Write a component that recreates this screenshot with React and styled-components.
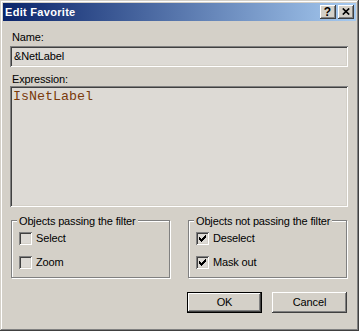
import React from "react";
import styled, { createGlobalStyle } from "styled-components";

const Global = createGlobalStyle`
  html, body { margin: 0; padding: 0; background: #d4d0c8; }
  * { box-sizing: border-box; }
`;

const FACE = "#d4d0c8";
const FIELD = "#dddad5";

const Window = styled.div`
  width: 359px;
  height: 331px;
  background: ${FACE};
  padding: 3px;
  display: flex;
  flex-direction: column;
  box-shadow: inset -1px -1px #404040, inset 1px 1px ${FACE},
    inset -2px -2px #808080, inset 2px 2px #ffffff;
  font-family: "Liberation Sans", Arial, sans-serif;
  font-size: 11px;
  letter-spacing: -0.15px;
  color: #000;
`;

const TitleBar = styled.div`
  height: 18px;
  display: flex;
  align-items: center;
  padding: 0 2px;
  background: linear-gradient(to right, #0a246a, #a6caf0);
`;

const TitleText = styled.div`
  flex: 1;
  color: #fff;
  font-weight: bold;
  letter-spacing: 0.3px;
  line-height: 14px;
`;

const CaptionGroup = styled.div`
  display: flex;
  gap: 2px;
`;

const CaptionButton = styled.div`
  width: 16px;
  height: 14px;
  background: ${FACE};
  display: flex;
  align-items: center;
  justify-content: center;
  padding: 0 1px 1px 0;
  box-shadow: inset -1px -1px #404040, inset 1px 1px #ffffff,
    inset -2px -2px #808080;
  font-weight: bold;
  font-size: 12px;
  line-height: 12px;
  letter-spacing: 0;
`;

const Client = styled.div`
  flex: 1;
  display: flex;
  flex-direction: column;
  padding: 10px 8px 0 7px;
`;

const FieldLabel = styled.div`
  line-height: 13px;
  padding-left: 2px;
  margin-top: ${(p) => p.$gap || 0}px;
`;

const sunken = `
  background: ${FIELD};
  box-shadow: inset 1px 1px #808080, inset -1px -1px #ffffff,
    inset 2px 2px #404040, inset -2px -2px ${FACE};
`;

const NameField = styled.div`
  ${sunken}
  margin-top: 2px;
  height: 21px;
  line-height: 21px;
  padding-left: 4px;
`;

const ExpressionBox = styled.div`
  ${sunken}
  height: 121px;
  padding: 3px 3px;
  font-family: "Liberation Mono", "Courier New", monospace;
  font-size: 13.33px;
  letter-spacing: 0;
  line-height: 15px;
  color: #7a3a0c;
`;

const GroupRow = styled.div`
  display: flex;
  justify-content: space-between;
  margin-top: 13px;
  padding: 0 1px;
`;

const GroupBox = styled.div`
  position: relative;
  width: 159px;
  height: 58px;
  border: 1px solid #808080;
  box-shadow: inset 1px 1px #ffffff, 1px 1px #ffffff;
  padding: 11px 7px 0;
  display: flex;
  flex-direction: column;
  gap: 11px;
`;

const Legend = styled.div`
  position: absolute;
  top: -6px;
  left: 5px;
  padding: 0 2px;
  background: ${FACE};
  line-height: 13px;
  white-space: nowrap;
`;

const CheckRow = styled.div`
  display: flex;
  align-items: center;
  gap: 4px;
  height: 13px;
  line-height: 13px;
`;

const CheckBox = styled.div`
  ${sunken}
  width: 13px;
  height: 13px;
  display: flex;
  align-items: center;
  justify-content: center;
`;

const ButtonRow = styled.div`
  display: flex;
  justify-content: flex-end;
  gap: 10px;
  margin-top: 14px;
  padding-right: 1px;
`;

const PushButton = styled.div`
  width: 75px;
  height: 21px;
  background: ${FACE};
  display: flex;
  align-items: center;
  justify-content: center;
  line-height: 13px;
  border: ${(p) => (p.$default ? "1px solid #000" : "none")};
  box-shadow: inset -1px -1px #404040, inset 1px 1px #ffffff,
    inset -2px -2px #808080, inset 2px 2px ${FACE};
`;

const CheckMark = () => (
  <svg width="7" height="7" viewBox="0 0 7 7" shapeRendering="crispEdges">
    <polygon points="0,2 2,4 7,-1 7,2 2,7 0,5" fill="#000" />
  </svg>
);

const CloseGlyph = () => (
  <svg width="8" height="7" viewBox="0 0 8 7">
    <path d="M0.8 0.5 L7.2 6.5 M7.2 0.5 L0.8 6.5" stroke="#000" strokeWidth="1.7" fill="none" />
  </svg>
);

const Check = ({ checked, label }) => (
  <CheckRow>
    <CheckBox>{checked && <CheckMark />}</CheckBox>
    <span>{label}</span>
  </CheckRow>
);

export default function App() {
  return (
    <>
      <Global />
      <Window>
        <TitleBar>
          <TitleText>Edit Favorite</TitleText>
          <CaptionGroup>
            <CaptionButton>?</CaptionButton>
            <CaptionButton>
              <CloseGlyph />
            </CaptionButton>
          </CaptionGroup>
        </TitleBar>
        <Client>
          <FieldLabel>Name:</FieldLabel>
          <NameField>&amp;NetLabel</NameField>
          <FieldLabel $gap={6}>Expression:</FieldLabel>
          <ExpressionBox>IsNetLabel</ExpressionBox>
          <GroupRow>
            <GroupBox>
              <Legend>Objects passing the filter</Legend>
              <Check label="Select" />
              <Check label="Zoom" />
            </GroupBox>
            <GroupBox>
              <Legend>Objects not passing the filter</Legend>
              <Check checked label="Deselect" />
              <Check checked label="Mask out" />
            </GroupBox>
          </GroupRow>
          <ButtonRow>
            <PushButton $default>OK</PushButton>
            <PushButton>Cancel</PushButton>
          </ButtonRow>
        </Client>
      </Window>
    </>
  );
}
